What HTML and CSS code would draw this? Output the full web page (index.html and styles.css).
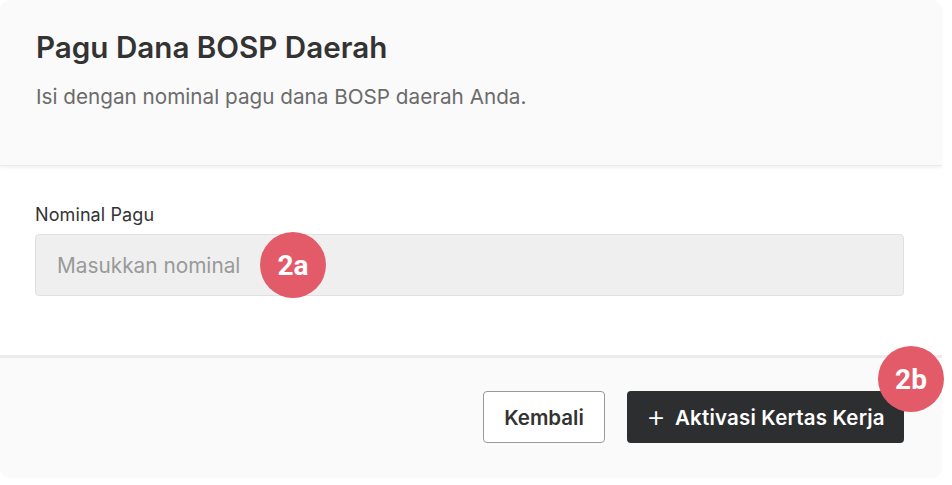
FILE: index.html
```html
<!DOCTYPE html>
<html lang="id">
<head>
<meta charset="utf-8">
<link rel="stylesheet" href="styles.css">
</head>
<body>
<div class="card">
  <div class="card-header">
    <h1 class="title">Pagu Dana BOSP Daerah</h1>
    <p class="subtitle">Isi dengan nominal pagu dana BOSP daerah Anda.</p>
  </div>
  <div class="card-body">
    <label class="label">Nominal Pagu</label>
    <div class="input-wrap">
      <div class="input">Masukkan nominal</div>
      <span class="badge badge-a">2a</span>
    </div>
  </div>
  <div class="card-footer">
    <button class="btn btn-outline">Kembali</button>
    <div class="btn-wrap">
      <button class="btn btn-dark"><span class="plus">+</span>Aktivasi Kertas Kerja</button>
      <span class="badge badge-b">2b</span>
    </div>
  </div>
</div>
</body>
</html>
```
FILE: styles.css
```css
* { box-sizing: border-box; }
html, body { margin: 0; padding: 0; background: #ffffff; }
body { font-family: "Inter", "Noto Sans", sans-serif; color: #333; }
.card {
  width: 942px;
  height: 478px;
  border-radius: 10px;
  display: flex;
  flex-direction: column;
  background: #fafafa;
}
.card-header {
  height: 166px;
  padding: 30px 36px 0;
  background: #fafafa;
  border-radius: 10px 10px 0 0;
  box-shadow: 0 2px 3px rgba(0,0,0,0.05);
  position: relative;
  z-index: 1;
  border-bottom: 1px solid #ebebeb;
}
.title {
  margin: 0;
  font-size: 29.6px;
  font-weight: 600;
  color: #333;
  line-height: 34px;
}
.subtitle {
  margin: 21px 0 0;
  font-size: 20.7px;
  color: #6b6b6b;
  line-height: 24px;
}
.card-body {
  height: 192px;
  background: #fff;
  padding: 37px 38px 0 35px;
  border-bottom: 3px solid #ebebeb;
}
.label {
  display: block;
  font-size: 18px;
  letter-spacing: 0.1px;
  color: #333;
  line-height: 24px;
  margin-bottom: 7px;
}
.input-wrap { position: relative; }
.input {
  height: 62px;
  background: #efefef;
  border: 1px solid #e0e0e0;
  border-radius: 4px;
  padding: 0 21px;
  display: flex;
  align-items: center;
  font-size: 20.8px;
  color: #999;
}
.badge {
  position: absolute;
  width: 66px;
  height: 66px;
  border-radius: 50%;
  background: #e35b69;
  color: #fff;
  font-family: "Roboto", "Liberation Sans", sans-serif;
  font-weight: 700;
  font-size: 28px;
  display: flex;
  align-items: center;
  justify-content: center;
}
.badge-a { left: 225px; top: -2px; }
.card-footer {
  flex: 1;
  background: #fafafa;
  border-radius: 0 0 10px 10px;
  display: flex;
  justify-content: flex-end;
  align-items: flex-start;
  padding: 33px 38px 0 0;
  gap: 22px;
}
.btn {
  height: 52px;
  border-radius: 4px;
  font-family: "Inter", sans-serif;
  font-size: 20.5px;
  font-weight: 600;
  padding: 0;
  cursor: pointer;
  display: flex;
  align-items: center;
  justify-content: center;
}
.btn-outline {
  width: 122px;
  background: #fff;
  border: 1px solid #999;
  color: #333;
}
.btn-wrap { position: relative; }
.btn-dark {
  width: 277px;
  background: #2d2e30;
  border: none;
  color: #fff;
  letter-spacing: 0.2px;
}
.plus { font-weight: 300; font-size: 30px; margin-right: 9px; line-height: 1; position: relative; top: -1px; }
.badge-b { right: -40px; top: -45px; }
```
